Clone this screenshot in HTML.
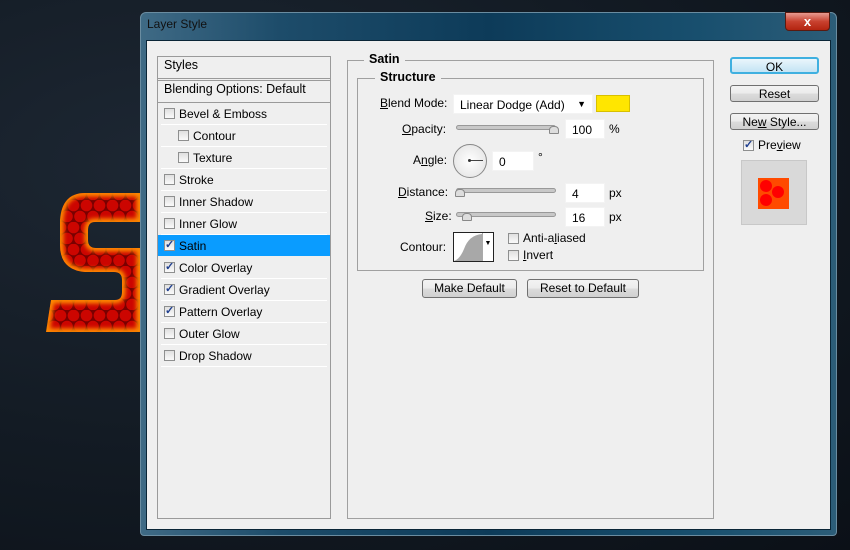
<!DOCTYPE html>
<html><head><meta charset="utf-8"><style>
*{margin:0;padding:0;box-sizing:border-box}
body{width:850px;height:550px;overflow:hidden;background:radial-gradient(ellipse at 20% 30%,#1d2733 0%,#131b24 50%,#0b1017 100%);font-family:"Liberation Sans",sans-serif;font-size:12px;color:#000;position:relative}
.a{position:absolute}
.win{left:140px;top:12px;width:697px;height:524px;border-radius:6px 6px 4px 4px;background:linear-gradient(90deg,#3f6a85 0%,#1d4c6a 20%,#0d3b59 50%,#184f6e 80%,#2c5d78 100%);border:1px solid #6a8ca0}
.client{left:146px;top:40px;width:685px;height:490px;background:#efefef;border:1px solid #0a2536}
.t{white-space:nowrap}
.cb{width:11px;height:11px;border:1px solid #8e8f8f;background:linear-gradient(#e0e0e0,#fafafa);position:absolute}
.cb.on::after{content:"✓";position:absolute;left:0px;top:-3px;font-size:11px;color:#1f3f8f;font-weight:bold}
.row{position:absolute;left:161px;width:166px;height:22px;border-bottom:1px solid #fff}
.row span{position:absolute;top:4px}
.row .cb{top:5px}
.inp{background:#fff;position:absolute;height:20px;padding:3px 6px;border:1px solid #f3f3f3}
.btn{position:absolute;border:1px solid #707070;border-radius:3px;background:linear-gradient(#f3f3f3 0%,#ebebeb 50%,#dcdcdc 51%,#d0d0d0 100%);text-align:center;line-height:16px}
.trk{position:absolute;height:5px;border:1px solid #999;border-radius:3px;background:#c8c8c8}
.thumb{position:absolute;width:10px;height:8px;background:#ddd;border:1px solid #888;border-radius:4px 4px 1px 1px}
u{text-decoration:underline}
</style></head><body>
<svg class="a" style="left:0;top:0" width="145" height="340">
<defs>
<pattern id="hx" width="13" height="22" patternUnits="userSpaceOnUse" x="2" y="2">
<rect width="13" height="22" fill="#7a0000"/>
<circle cx="6.5" cy="5.5" r="5.8" fill="#cc0500"/>
<circle cx="0" cy="16.5" r="5.8" fill="#cc0500"/><circle cx="13" cy="16.5" r="5.8" fill="#cc0500"/>
</pattern>
<filter id="bl"><feGaussianBlur stdDeviation="2"/></filter>
<clipPath id="sc"><path id="sp" d="M85 193 L140 193 L140 222 L95 222 Q88 222 88 230 L88 240 Q88 248 96 248 L140 248 L140 332 L46 332 L51 300 L115 300 Q122 300 122 292 L122 280 Q122 272 114 272 L85 272 Q60 270 60 245 L60 220 Q62 193 85 193 Z"/></clipPath>
</defs>
<g clip-path="url(#sc)">
<rect width="145" height="340" fill="url(#hx)"/>
<path d="M85 193 L140 193 L140 222 L95 222 Q88 222 88 230 L88 240 Q88 248 96 248 L140 248 L140 332 L46 332 L51 300 L115 300 Q122 300 122 292 L122 280 Q122 272 114 272 L85 272 Q60 270 60 245 L60 220 Q62 193 85 193 Z" fill="none" stroke="#ff8a00" stroke-width="7" filter="url(#bl)"/>
</g>
</svg>
<div class="a win"></div>
<div class="a t" style="left:147px;top:17px;color:#111;font-size:12px">Layer Style</div>
<div class="a" style="left:785px;top:12px;width:45px;height:19px;border-radius:0 0 4px 4px;background:linear-gradient(#e89a90,#c8412f 50%,#b32410);border:1px solid #5a1a10;color:#fff;text-align:center;font-weight:bold;font-size:13px;line-height:17px">x</div>
<div class="a client"></div>

<div class="a" style="left:157px;top:56px;width:174px;height:463px;border:1px solid #9a9a9a;background:#efefef"></div>
<div class="a t" style="left:164px;top:58px;font-size:12.5px">Styles</div>
<div class="a" style="left:158px;top:78px;width:172px;height:3px;border-top:1px solid #9a9a9a;border-bottom:1px solid #9a9a9a"></div>
<div class="a t" style="left:164px;top:82px;font-size:12.5px">Blending Options: Default</div>
<div class="a" style="left:158px;top:102px;width:172px;border-top:1px solid #9a9a9a"></div>

<div class="row" style="top:103px"><div class="cb" style="left:3px"></div><span style="left:18px">Bevel &amp; Emboss</span></div>
<div class="row" style="top:125px"><div class="cb" style="left:17px"></div><span style="left:32px">Contour</span></div>
<div class="row" style="top:147px"><div class="cb" style="left:17px"></div><span style="left:32px">Texture</span></div>
<div class="row" style="top:169px"><div class="cb" style="left:3px"></div><span style="left:18px">Stroke</span></div>
<div class="row" style="top:191px"><div class="cb" style="left:3px"></div><span style="left:18px">Inner Shadow</span></div>
<div class="row" style="top:213px"><div class="cb" style="left:3px"></div><span style="left:18px">Inner Glow</span></div>
<div class="row" style="top:235px;left:158px;width:172px;background:#0a9cff;height:21px;border:none"><div class="cb on" style="left:6px"></div><span style="left:21px">Satin</span></div>
<div class="row" style="top:257px"><div class="cb on" style="left:3px"></div><span style="left:18px">Color Overlay</span></div>
<div class="row" style="top:279px"><div class="cb on" style="left:3px"></div><span style="left:18px">Gradient Overlay</span></div>
<div class="row" style="top:301px"><div class="cb on" style="left:3px"></div><span style="left:18px">Pattern Overlay</span></div>
<div class="row" style="top:323px"><div class="cb" style="left:3px"></div><span style="left:18px">Outer Glow</span></div>
<div class="row" style="top:345px"><div class="cb" style="left:3px"></div><span style="left:18px">Drop Shadow</span></div>

<div class="a" style="left:347px;top:60px;width:367px;height:459px;border:1px solid #a0a0a0"></div>
<div class="a t" style="left:364px;top:52px;padding:0 5px;background:#efefef;font-weight:bold;font-size:12.5px">Satin</div>
<div class="a" style="left:357px;top:78px;width:347px;height:193px;border:1px solid #a0a0a0"></div>
<div class="a t" style="left:375px;top:70px;padding:0 5px;background:#efefef;font-weight:bold;font-size:12.5px">Structure</div>

<div class="a t" style="left:380px;top:96px"><u>B</u>lend Mode:</div>
<div class="inp" style="left:453px;top:94px;width:140px">Linear Dodge (Add)<span style="position:absolute;right:6px;top:4px;font-size:9px">▼</span></div>
<div class="a" style="left:596px;top:95px;width:34px;height:17px;background:#ffe600;border:1px solid #d8c000"></div>

<div class="a t" style="left:402px;top:122px"><u>O</u>pacity:</div>
<div class="trk" style="left:456px;top:125px;width:100px"></div><div class="thumb" style="left:549px;top:126px"></div>
<div class="inp" style="left:565px;top:119px;width:40px">100</div><div class="a t" style="left:609px;top:122px">%</div>

<div class="a t" style="left:413px;top:153px">A<u>n</u>gle:</div>
<div class="a" style="left:453px;top:144px;width:34px;height:34px;border-radius:50%;border:1px solid #888;background:radial-gradient(#fff,#e0e0e0)"></div>
<div class="a" style="left:469px;top:160px;width:14px;height:1px;background:#444"></div><div class="a" style="left:468px;top:159px;width:3px;height:3px;background:#333;border-radius:50%"></div>
<div class="inp" style="left:492px;top:151px;width:42px">0</div><div class="a t" style="left:538px;top:150px">°</div>

<div class="a t" style="left:398px;top:185px"><u>D</u>istance:</div>
<div class="trk" style="left:456px;top:188px;width:100px"></div><div class="thumb" style="left:455px;top:189px"></div>
<div class="inp" style="left:565px;top:183px;width:40px">4</div><div class="a t" style="left:609px;top:186px">px</div>

<div class="a t" style="left:425px;top:209px"><u>S</u>ize:</div>
<div class="trk" style="left:456px;top:212px;width:100px"></div><div class="thumb" style="left:462px;top:213px"></div>
<div class="inp" style="left:565px;top:207px;width:40px">16</div><div class="a t" style="left:609px;top:210px">px</div>

<div class="a t" style="left:400px;top:240px">Contour:</div>
<div class="a" style="left:453px;top:232px;width:41px;height:30px;border:1px solid #222;background:#fff"></div>
<svg class="a" style="left:454px;top:233px" width="28" height="28"><path d="M0 28 Q6 26 10 16 Q15 2 28 1 L28 28 Z" fill="#a8a8a8"/></svg>
<div class="a" style="left:482px;top:233px;width:11px;height:28px;border-left:1px solid #aaa;font-size:7px;text-align:center;line-height:22px">▼</div>
<div class="cb" style="left:508px;top:233px"></div><div class="a t" style="left:523px;top:231px">Anti-a<u>l</u>iased</div>
<div class="cb" style="left:508px;top:250px"></div><div class="a t" style="left:523px;top:248px"><u>I</u>nvert</div>

<div class="btn" style="left:422px;top:279px;width:95px;height:19px">Make Default</div>
<div class="btn" style="left:527px;top:279px;width:112px;height:19px">Reset to Default</div>

<div class="btn" style="left:730px;top:57px;width:89px;height:17px;border:2px solid #3fb0e0;background:linear-gradient(#eaf6fc,#c4e4f4)">OK</div>
<div class="btn" style="left:730px;top:85px;width:89px;height:17px">Reset</div>
<div class="btn" style="left:730px;top:113px;width:89px;height:17px">Ne<u>w</u> Style...</div>
<div class="cb on" style="left:743px;top:140px"></div><div class="a t" style="left:758px;top:138px">Pre<u>v</u>iew</div>
<div class="a" style="left:741px;top:160px;width:66px;height:65px;background:#d9d9d9;border:1px solid #c8c8c8"></div>
<div class="a" style="left:758px;top:178px;width:31px;height:31px;background:#ff4a00"></div>
<div class="a" style="left:760px;top:180px;width:12px;height:12px;border-radius:50%;background:#f00"></div>
<div class="a" style="left:772px;top:186px;width:12px;height:12px;border-radius:50%;background:#f00"></div>
<div class="a" style="left:760px;top:194px;width:12px;height:12px;border-radius:50%;background:#f00"></div>
</body></html>
